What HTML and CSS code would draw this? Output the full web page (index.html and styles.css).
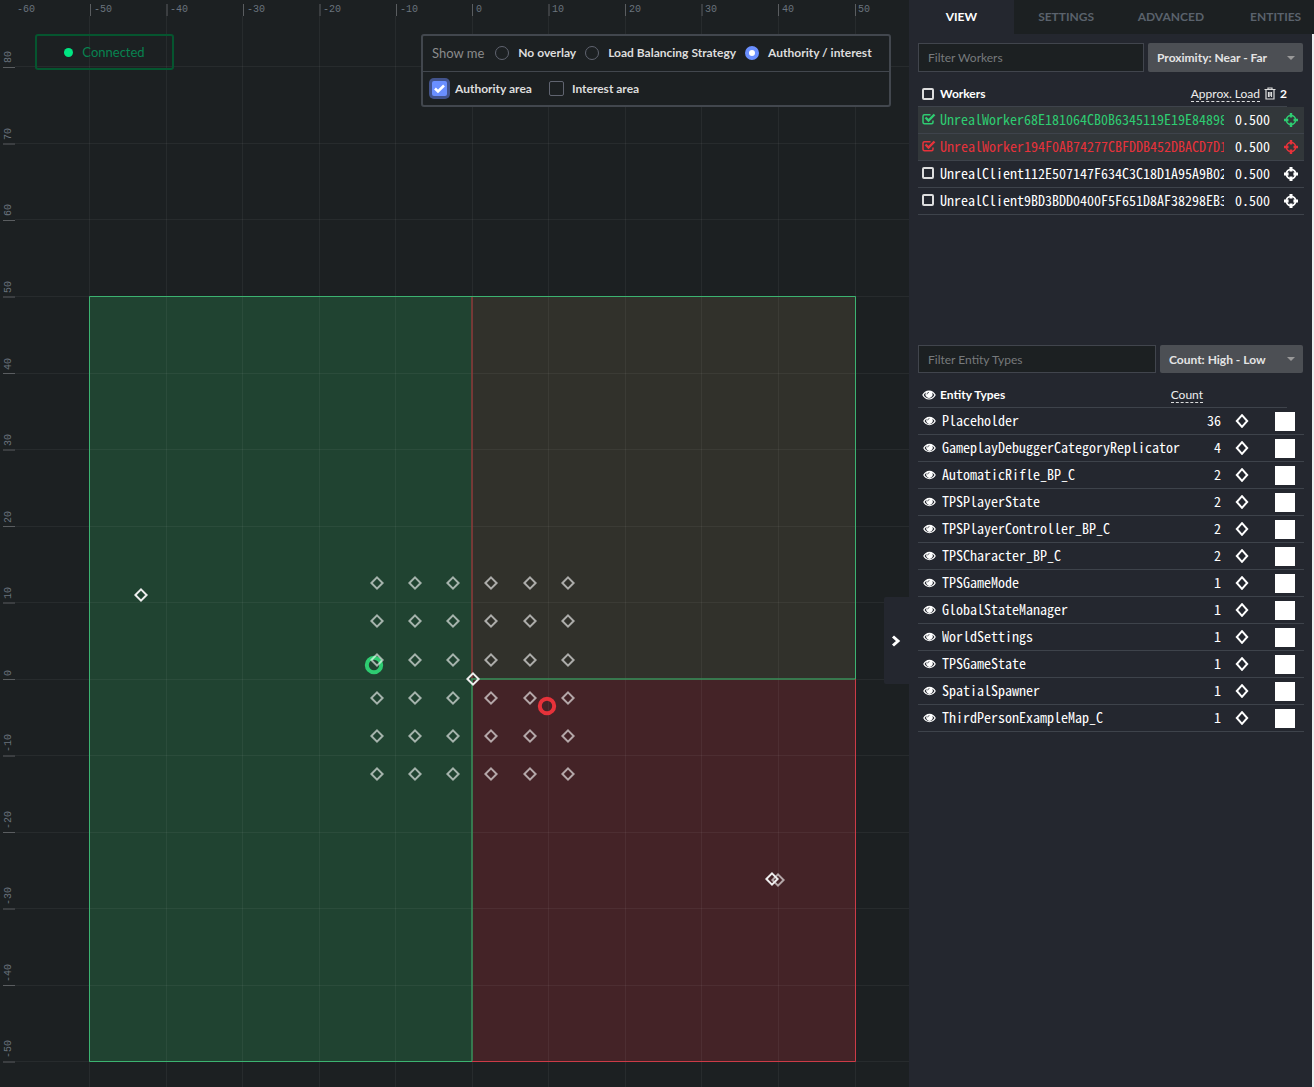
FILE: index.html
```html
<!DOCTYPE html>
<html lang="en">
<head>
<meta charset="utf-8">
<title>Inspector</title>
<link rel="stylesheet" href="styles.css">
</head>
<body>
<svg class="sprite" aria-hidden="true">
  <symbol id="eye" viewBox="0 0 14 10"><path fill="currentColor" fill-rule="evenodd" d="M7 .5C10 .5 12.500 2.500 13.800 5 12.500 7.500 10 9.500 7 9.500S1.500 7.500.2 5C1.500 2.500 4 .5 7 .5zM1.700 5c1.200 2.200 3 3.400 5.300 3.400S11.100 7.200 12.300 5C11.700 4 10.900 3.100 9.900 2.500A3.500 3.500 0 1 1 4.100 2.500C3.100 3.100 2.300 4 1.700 5z"/><path d="M5 4.300A2 2 0 0 1 7 2.400" fill="none" stroke="#24272f" stroke-width=".7"/></symbol>
  <symbol id="diamond" viewBox="0 0 14 14"><path d="M7 1.200 12.200 7 7 12.800 1.800 7z" fill="none" stroke="currentColor" stroke-width="2"/></symbol>
  <symbol id="target" viewBox="0 0 14 14"><circle cx="7" cy="7" r="4.600" fill="none" stroke="currentColor" stroke-width="1.900"/><path d="M5.500 0h3v4.600h-3zM5.500 9.400h3V14h-3zM0 5.500h4.600v3H0zM9.400 5.500H14v3H9.400z" fill="currentColor"/></symbol>
  <symbol id="target-thin" viewBox="0 0 14 14"><circle cx="7" cy="7" r="4.600" fill="none" stroke="currentColor" stroke-width="1.600"/><path d="M5.800 0h2.400v4.500H5.800zM5.800 9.500h2.400V14H5.800zM0 5.800h4.500v2.400H0zM9.500 5.800H14v2.400H9.500z" fill="currentColor"/></symbol>
  <symbol id="mark" viewBox="-8 -8 16 16"><path d="M0-5.600 5.600 0 0 5.600-5.600 0z" fill="none" stroke="currentColor" stroke-width="2"/></symbol>
</svg>
<div class="app">
  <main class="map">
    <svg class="world" aria-label="World map">
      <g class="areas">
        <rect x="89" y="296" width="383" height="766" fill="#204331"/>
        <rect x="472" y="296" width="384" height="383" fill="#31312b"/>
        <rect x="472" y="679" width="384" height="383" fill="#442327"/>
      </g>
      <path class="grid" d="M89.500 16V1087M166.500 16V1087M242.500 16V1087M319.500 16V1087M395.500 16V1087M472.500 16V1087M548.500 16V1087M625.500 16V1087M701.500 16V1087M778.500 16V1087M855.500 16V1087M15 66.500H909M15 143.500H909M15 219.500H909M15 296.500H909M15 373.500H909M15 449.500H909M15 526.500H909M15 602.500H909M15 679.500H909M15 755.500H909M15 832.500H909M15 908.500H909M15 985.500H909M15 1061.500H909"/>
      <g fill="none">
        <path stroke="#8d3838" stroke-width="1.500" d="M472 297V679"/>
        <path stroke="#cc3b47" d="M855.500 679V1061.500H472"/>
        <path stroke="#3cb371" d="M472 1061.500H89.500V296.500H855.500V679"/>
        <path stroke="#37905a" stroke-width="1.500" d="M855 679H472V1061"/>
      </g>
      <path class="ticks" d="M90.500 4V16M167 4V16M243.500 4V16M320 4V16M396.500 4V16M472.500 4V16M549 4V16M625.500 4V16M702 4V16M778.500 4V16M855.500 4V16M3 67.500H15M3 144H15M3 220.500H15M3 297H15M3 373.500H15M3 450H15M3 526.500H15M3 603H15M3 679.500H15M3 756H15M3 832.500H15M3 909H15M3 985.500H15M3 1062H15"/>
      <g class="scale">
        <text x="17" y="12">-60</text><text x="94" y="12">-50</text><text x="170" y="12">-40</text><text x="247" y="12">-30</text><text x="323" y="12">-20</text><text x="400" y="12">-10</text><text x="476" y="12">0</text><text x="552" y="12">10</text><text x="629" y="12">20</text><text x="705" y="12">30</text><text x="782" y="12">40</text><text x="858" y="12">50</text>
      </g>
      <g class="scale" transform="rotate(-90)">
        <text x="-63" y="11">80</text><text x="-140" y="11">70</text><text x="-216" y="11">60</text><text x="-293" y="11">50</text><text x="-370" y="11">40</text><text x="-446" y="11">30</text><text x="-523" y="11">20</text><text x="-599" y="11">10</text><text x="-676" y="11">0</text><text x="-752" y="11">-10</text><text x="-829" y="11">-20</text><text x="-905" y="11">-30</text><text x="-982" y="11">-40</text><text x="-1058" y="11">-50</text>
      </g>
      <circle cx="374" cy="665" r="7.200" fill="none" stroke="#2ecc71" stroke-width="4"/>
      <g class="placeholders">
        <g id="markrow"><use href="#mark" x="369" y="575" width="16" height="16"/><use href="#mark" x="407" y="575" width="16" height="16"/><use href="#mark" x="445" y="575" width="16" height="16"/><use href="#mark" x="483" y="575" width="16" height="16"/><use href="#mark" x="522" y="575" width="16" height="16"/><use href="#mark" x="560" y="575" width="16" height="16"/></g>
        <use href="#markrow" y="38"/><use href="#markrow" y="77"/><use href="#markrow" y="115"/><use href="#markrow" y="153"/><use href="#markrow" y="191"/>
        <use href="#mark" x="770" y="872" width="16" height="16"/>
      </g>
      <circle cx="547" cy="706" r="7.200" fill="none" stroke="#e6323a" stroke-width="4"/>
      <g class="actors"><use href="#mark" x="133" y="587" width="16" height="16"/><use href="#mark" x="465" y="671" width="16" height="16"/><use href="#mark" x="764" y="871" width="16" height="16"/></g>
    </svg>
    <div class="status"><span class="dot"></span>Connected</div>
    <form class="overlay">
      <div class="overlay-row">
        <span class="lead">Show me</span>
        <label><input type="radio" name="overlay"><span>No overlay</span></label>
        <label><input type="radio" name="overlay"><span>Load Balancing Strategy</span></label>
        <label><input type="radio" name="overlay" checked><span>Authority / interest</span></label>
      </div>
      <div class="overlay-row areas-row">
        <label><input type="checkbox" class="focused" checked><span>Authority area</span></label>
        <label><input type="checkbox"><span>Interest area</span></label>
      </div>
    </form>
    <button class="collapse" type="button" aria-label="Collapse panel"><svg width="10" height="12" viewBox="0 0 10 12"><path d="M2 1.500 7 6 2 10.500" fill="none" stroke="#fff" stroke-width="3"/></svg></button>
  </main>
  <aside class="panel">
    <nav class="tabs">
      <button type="button" class="active">VIEW</button><button type="button">SETTINGS</button><button type="button">ADVANCED</button><button type="button">ENTITIES</button>
    </nav>
    <div class="content">
      <section class="workers">
        <div class="filter">
          <input type="text" placeholder="Filter Workers" aria-label="Filter Workers">
          <select class="wide" aria-label="Sort workers"><option>Proximity: Near - Far</option></select>
        </div>
        <table>
          <colgroup><col class="c-check"><col><col class="c-load"><col class="c-target"></colgroup>
          <thead><tr><th colspan="4"><div class="head">
            <input type="checkbox" class="box" aria-label="All workers"><span class="title">Workers</span>
            <a href="#load">Approx. Load</a>
            <button type="button" class="trash" aria-label="Clear workers"><svg width="12" height="13" viewBox="0 0 12 13"><path d="M.5 2.500h11M4 2.500V1h4v1.500M2 3v9h8V3M4.500 5v5M6 5v5M7.500 5v5" fill="none" stroke="#ddd" stroke-width="1.200"/></svg></button><span>2</span>
          </div></th></tr></thead>
          <tbody>
            <tr class="on green"><td><input type="checkbox" class="box" checked aria-label="Show worker 1"></td><td class="name">UnrealWorker68E181064CB0B6345119E19E84898</td><td class="num">0.500</td><td><button type="button" aria-label="Locate"><svg width="14" height="14"><use href="#target-thin"/></svg></button></td></tr>
            <tr class="on red"><td><input type="checkbox" class="box" checked aria-label="Show worker 2"></td><td class="name">UnrealWorker194F0AB74277CBFDDB452DBACD7D1</td><td class="num">0.500</td><td><button type="button" aria-label="Locate"><svg width="14" height="14"><use href="#target-thin"/></svg></button></td></tr>
            <tr><td><input type="checkbox" class="box" aria-label="Show client 1"></td><td class="name">UnrealClient112E507147F634C3C18D1A95A9B02</td><td class="num">0.500</td><td><button type="button" aria-label="Locate"><svg width="14" height="14"><use href="#target"/></svg></button></td></tr>
            <tr><td><input type="checkbox" class="box" aria-label="Show client 2"></td><td class="name">UnrealClient9BD3BDD0400F5F651D8AF38298EB3</td><td class="num">0.500</td><td><button type="button" aria-label="Locate"><svg width="14" height="14"><use href="#target"/></svg></button></td></tr>
          </tbody>
        </table>
      </section>
      <section class="types">
        <div class="filter">
          <input type="text" placeholder="Filter Entity Types" aria-label="Filter Entity Types">
          <select class="narrow" aria-label="Sort entity types"><option>Count: High - Low</option></select>
        </div>
        <table>
          <colgroup><col class="c-eye"><col><col class="c-count"><col class="c-shape"><col class="c-color"></colgroup>
          <thead><tr><th colspan="5"><div class="head">
            <button type="button" class="eye-all" aria-label="Toggle all"><svg width="14" height="10"><use href="#eye"/></svg></button><span class="title">Entity Types</span>
            <a href="#count" class="count">Count</a>
          </div></th></tr></thead>
          <tbody>
            <tr><td><button type="button" aria-label="Toggle"><svg width="13" height="10"><use href="#eye"/></svg></button></td><td class="name">Placeholder</td><td class="num">36</td><td><button type="button" aria-label="Shape"><svg width="14" height="14"><use href="#diamond"/></svg></button></td><td><input type="color" value="#ffffff" aria-label="Colour"></td></tr>
            <tr><td><button type="button" aria-label="Toggle"><svg width="13" height="10"><use href="#eye"/></svg></button></td><td class="name">GameplayDebuggerCategoryReplicator</td><td class="num">4</td><td><button type="button" aria-label="Shape"><svg width="14" height="14"><use href="#diamond"/></svg></button></td><td><input type="color" value="#ffffff" aria-label="Colour"></td></tr>
            <tr><td><button type="button" aria-label="Toggle"><svg width="13" height="10"><use href="#eye"/></svg></button></td><td class="name">AutomaticRifle_BP_C</td><td class="num">2</td><td><button type="button" aria-label="Shape"><svg width="14" height="14"><use href="#diamond"/></svg></button></td><td><input type="color" value="#ffffff" aria-label="Colour"></td></tr>
            <tr><td><button type="button" aria-label="Toggle"><svg width="13" height="10"><use href="#eye"/></svg></button></td><td class="name">TPSPlayerState</td><td class="num">2</td><td><button type="button" aria-label="Shape"><svg width="14" height="14"><use href="#diamond"/></svg></button></td><td><input type="color" value="#ffffff" aria-label="Colour"></td></tr>
            <tr><td><button type="button" aria-label="Toggle"><svg width="13" height="10"><use href="#eye"/></svg></button></td><td class="name">TPSPlayerController_BP_C</td><td class="num">2</td><td><button type="button" aria-label="Shape"><svg width="14" height="14"><use href="#diamond"/></svg></button></td><td><input type="color" value="#ffffff" aria-label="Colour"></td></tr>
            <tr><td><button type="button" aria-label="Toggle"><svg width="13" height="10"><use href="#eye"/></svg></button></td><td class="name">TPSCharacter_BP_C</td><td class="num">2</td><td><button type="button" aria-label="Shape"><svg width="14" height="14"><use href="#diamond"/></svg></button></td><td><input type="color" value="#ffffff" aria-label="Colour"></td></tr>
            <tr><td><button type="button" aria-label="Toggle"><svg width="13" height="10"><use href="#eye"/></svg></button></td><td class="name">TPSGameMode</td><td class="num">1</td><td><button type="button" aria-label="Shape"><svg width="14" height="14"><use href="#diamond"/></svg></button></td><td><input type="color" value="#ffffff" aria-label="Colour"></td></tr>
            <tr><td><button type="button" aria-label="Toggle"><svg width="13" height="10"><use href="#eye"/></svg></button></td><td class="name">GlobalStateManager</td><td class="num">1</td><td><button type="button" aria-label="Shape"><svg width="14" height="14"><use href="#diamond"/></svg></button></td><td><input type="color" value="#ffffff" aria-label="Colour"></td></tr>
            <tr><td><button type="button" aria-label="Toggle"><svg width="13" height="10"><use href="#eye"/></svg></button></td><td class="name">WorldSettings</td><td class="num">1</td><td><button type="button" aria-label="Shape"><svg width="14" height="14"><use href="#diamond"/></svg></button></td><td><input type="color" value="#ffffff" aria-label="Colour"></td></tr>
            <tr><td><button type="button" aria-label="Toggle"><svg width="13" height="10"><use href="#eye"/></svg></button></td><td class="name">TPSGameState</td><td class="num">1</td><td><button type="button" aria-label="Shape"><svg width="14" height="14"><use href="#diamond"/></svg></button></td><td><input type="color" value="#ffffff" aria-label="Colour"></td></tr>
            <tr><td><button type="button" aria-label="Toggle"><svg width="13" height="10"><use href="#eye"/></svg></button></td><td class="name">SpatialSpawner</td><td class="num">1</td><td><button type="button" aria-label="Shape"><svg width="14" height="14"><use href="#diamond"/></svg></button></td><td><input type="color" value="#ffffff" aria-label="Colour"></td></tr>
            <tr><td><button type="button" aria-label="Toggle"><svg width="13" height="10"><use href="#eye"/></svg></button></td><td class="name">ThirdPersonExampleMap_C</td><td class="num">1</td><td><button type="button" aria-label="Shape"><svg width="14" height="14"><use href="#diamond"/></svg></button></td><td><input type="color" value="#ffffff" aria-label="Colour"></td></tr>
          </tbody>
        </table>
      </section>
    </div>
  </aside>
</div>
</body>
</html>
```
FILE: styles.css
```css
* { box-sizing: border-box; }
body { margin: 0; background: #1c2022; color: #fff; font: 12px/16px Lato, sans-serif; }
button { display: inline-flex; align-items: center; justify-content: center; margin: 0; padding: 0; border: 0; background: none; color: inherit; font: inherit; }
input { margin: 0; }
svg { display: block; }
.sprite { position: absolute; width: 0; height: 0; }
.app { display: flex; min-height: 100vh; }

.map { position: relative; flex: 1; min-width: 0; overflow: hidden; }
.world { width: 100%; height: 100%; }
.grid { fill: none; stroke: #fff; stroke-opacity: .05; }
.ticks { fill: none; stroke: #5a5d60; }
.scale { fill: #6a737d; font: 10px "Liberation Mono", monospace; }
.placeholders { color: #fff; opacity: .6; }
.actors { color: #eee; }

.status { position: absolute; top: 34px; left: 35px; display: flex; align-items: center; justify-content: center; gap: 9px; width: 139px; height: 36px; border: 2px solid #05552f; border-radius: 3px; color: #078350; font-size: 13px; }
.dot { width: 9px; height: 9px; border-radius: 50%; background: #00e582; }

.overlay { position: absolute; top: 34px; right: 18px; width: 470px; border: 2px solid #42474e; border-radius: 3px; background: #1c2022; color: #ddd; font-weight: 700; }
.overlay-row { display: flex; align-items: center; gap: 9px; height: 35px; padding: 0 9px 2px; }
.overlay-row + .overlay-row { height: 34px; padding-bottom: 0; border-top: 1px solid #42474e; }
.lead { margin-right: 2px; color: #8a8b8c; font-size: 13px; font-weight: 400; }
.overlay label { display: flex; align-items: center; gap: 9px; white-space: nowrap; }
.overlay .areas-row { gap: 17px; }
.overlay .areas-row label { gap: 8px; }
.overlay input { appearance: none; width: 14px; height: 14px; border: 1px solid #606470; }
.overlay input[type=radio] { border-radius: 50%; }
.overlay input[type=radio]:checked { border: 4px solid #6a8fff; background: #fff; }
.overlay input[type=checkbox] { width: 15px; height: 15px; border-radius: 2px; }
.overlay .focused { border: 0; background: #6a8fff url("data:image/svg+xml,%3Csvg xmlns='http://www.w3.org/2000/svg' viewBox='0 0 15 15'%3E%3Cpath d='M3 7.500l3 3L12 4.500' fill='none' stroke='white' stroke-width='2.500'/%3E%3C/svg%3E"); box-shadow: 0 0 0 3px #42538c; }

.collapse { position: absolute; top: 597px; right: 0; width: 25px; height: 87px; padding-right: 2px; border-radius: 2px 0 0 2px; background: #24272f; }

.panel { flex: 0 0 405px; background: #24272f; overflow: hidden; }
.tabs { display: grid; grid-template-columns: repeat(4, 1fr); height: 34px; margin-right: -14px; background: #1c2022; }
.tabs button { color: #5a626c; font-weight: 700; }
.tabs .active { background: #24272f; color: #fff; }
.content { min-height: calc(100% - 34px); padding: 9px 8px 0 9px; border-right: 2px solid #eceef0; }
.workers { min-height: 302px; }
.filter { display: flex; gap: 4px; padding-right: 1px; }
.filter input { flex: 1; min-width: 0; height: 29px; padding: 0 9px; border: 1px solid #41454d; background: #1c2022; color: #ddd; font: 12px Lato, sans-serif; }
.filter input::placeholder { color: #777a7c; }
.filter select { appearance: none; height: 29px; padding: 0 9px; border: 0; border-radius: 2px; background: #4c4f54 url("data:image/svg+xml,%3Csvg xmlns='http://www.w3.org/2000/svg' width='8' height='4'%3E%3Cpath d='M0 0h8L4 4z' fill='%23999'/%3E%3C/svg%3E") no-repeat right 8px center; color: #e4e4e4; font: 700 12px Lato, sans-serif; }
.types .filter input, .types .filter select { height: 28px; }
.wide { width: 155px; }
.narrow { width: 143px; }

table { width: 100%; border-collapse: separate; border-spacing: 0; table-layout: fixed; }
th, td { padding: 0; text-align: left; }
.c-check { width: 22px; }
.c-load { width: 46px; }
.c-target { width: 34px; }
.c-eye { width: 24px; }
.c-count { width: 40px; }
.c-shape { width: 54px; }
.c-color { width: 29px; }
.head { display: flex; align-items: center; height: 35px; margin-right: 17px; padding-top: 9px; border-bottom: 1px solid #3e434b; }
.head .box { margin-right: 6px; }
.title { flex: 1; }
.head a { border-bottom: 1px dashed #ddd; color: #eee; font-weight: 400; line-height: 15px; text-decoration: none; }
.trash { margin: 0 4px; }
.head .count { margin-right: 84px; }
.eye-all { width: 22px; }
td { height: 27px; border-bottom: 1px solid #3e434b; line-height: 16px; }
td button { vertical-align: middle; padding-bottom: 1px; }
.name, .num { padding-bottom: 2px; font-family: "Noto Sans Mono CJK SC", "Noto Sans Mono CJK JP", "DejaVu Sans Mono", monospace; font-size: 14px; white-space: nowrap; overflow: hidden; }
.num { text-align: right; }
.on { background: #32373a; }
.green { color: #2ecc71; }
.red { color: #e6323a; }
.on .num { color: #fff; }
.workers td:first-child { padding-bottom: 2px; }
.workers td:last-child { padding-left: 14px; }
.box { appearance: none; display: block; width: 12px; height: 12px; margin-left: 4px; border: 2px solid #ddd; border-radius: 2px; }
.box:checked { width: 14px; border: 0; background: no-repeat center / 14px 12px; }
.green .box { background-image: url("data:image/svg+xml,%3Csvg xmlns='http://www.w3.org/2000/svg' viewBox='0 0 14 12'%3E%3Cpath d='M8.500 1.800H2.500q-1.500 0-1.500 1.500v6q0 1.500 1.500 1.500h7q1.500 0 1.500-1.500V7.500' fill='none' stroke='%232ecc71' stroke-width='1.500'/%3E%3Cpath d='M3.500 4.500l3 3L12.500 1.500' fill='none' stroke='%232ecc71' stroke-width='2.400'/%3E%3C/svg%3E"); }
.red .box { background-image: url("data:image/svg+xml,%3Csvg xmlns='http://www.w3.org/2000/svg' viewBox='0 0 14 12'%3E%3Cpath d='M8.500 1.800H2.500q-1.500 0-1.500 1.500v6q0 1.500 1.500 1.500h7q1.500 0 1.500-1.500V7.500' fill='none' stroke='%23e6323a' stroke-width='1.500'/%3E%3Cpath d='M3.500 4.500l3 3L12.500 1.500' fill='none' stroke='%23e6323a' stroke-width='2.400'/%3E%3C/svg%3E"); }
.types td:first-child { padding-left: 5px; }
.types td:nth-child(4) { padding-left: 14px; }
input[type=color] { display: block; width: 20px; height: 19px; padding: 0; border: 0; background: #fff; }
input[type=color]::-webkit-color-swatch-wrapper { padding: 0; }
input[type=color]::-webkit-color-swatch { border: 0; }
```
